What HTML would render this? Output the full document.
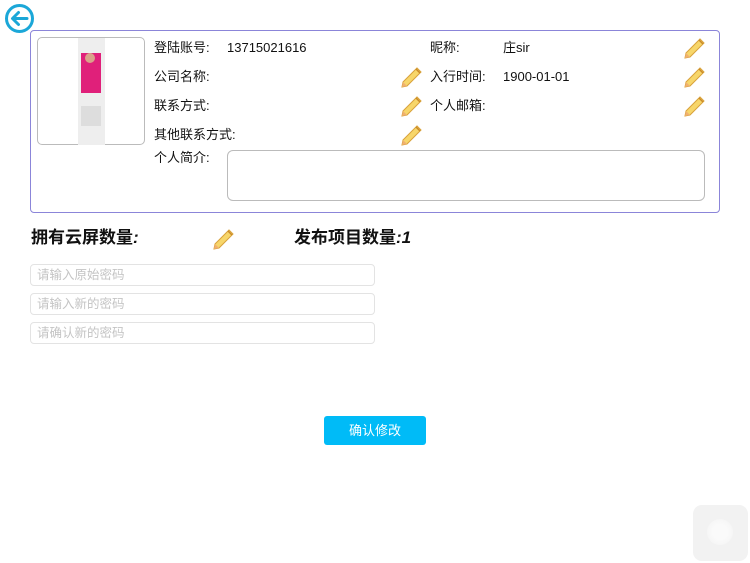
<!DOCTYPE html>
<html><head><meta charset="utf-8"><style>
body{margin:0;width:750px;height:563px;background:#fff;position:relative;overflow:hidden;font-family:"Liberation Sans","Noto Sans CJK SC",sans-serif;color:#111}
.a{position:absolute}
.l{position:absolute;font-size:13px;line-height:16px;white-space:nowrap}
.box{left:30px;top:30px;width:688px;height:181px;border:1.5px solid #8b85d9;border-radius:4px}
.inp{position:absolute;left:30px;border:1px solid #e3e3e3;border-radius:4px;font-size:12.5px;color:#c4c4c4;line-height:20px;padding-left:6px;box-sizing:border-box;width:345px;height:22px}
.pen{position:absolute;width:26px;height:26px}
</style></head><body>
<svg class="a" style="left:4px;top:3px" width="31" height="31" viewBox="0 0 31 31"><circle cx="15.5" cy="15.5" r="13" fill="none" stroke="#1ba7d8" stroke-width="3"/><path d="M23 15.5H9M14.5 9.5L8.5 15.5L14.5 21.5" fill="none" stroke="#1ba7d8" stroke-width="3" stroke-linecap="round" stroke-linejoin="round"/></svg>
<div class="a box"></div>
<div class="a" style="left:37px;top:37px;width:108px;height:108px;border:1px solid #bbb;border-radius:5px;box-sizing:border-box"></div>
<div class="a" style="left:78px;top:38px;width:27px;height:107px;background:#eee"></div>
<div class="a" style="left:81px;top:53px;width:20px;height:40px;background:#e0207a"></div>
<div class="a" style="left:85px;top:53px;width:10px;height:10px;background:#d9a38a;border-radius:50%"></div>
<div class="a" style="left:81px;top:106px;width:20px;height:20px;background:#ddd"></div>
<div class="l" style="left:154px;top:40px">登陆账号:</div>
<div class="l" style="left:227px;top:40px">13715021616</div>
<div class="l" style="left:430px;top:40px">昵称:</div>
<div class="l" style="left:503px;top:40px">庄sir</div>
<div class="l" style="left:154px;top:69px">公司名称:</div>
<div class="l" style="left:430px;top:69px">入行时间:</div>
<div class="l" style="left:503px;top:69px">1900-01-01</div>
<div class="l" style="left:154px;top:98px">联系方式:</div>
<div class="l" style="left:430px;top:98px">个人邮箱:</div>
<div class="l" style="left:154px;top:127px">其他联系方式:</div>
<div class="l" style="left:154px;top:150px">个人简介:</div>
<div class="a" style="left:227px;top:150px;width:478px;height:51px;border:1px solid #bbb;border-radius:6px;box-sizing:border-box"></div>
<svg width="0" height="0" style="position:absolute"><defs><g id="p"><path d="M4 19L18 5L22 9L8 23L3 24Z" fill="#f7d66a" stroke="#d9a23a" stroke-width="1"/><path d="M17 6L21 10" stroke="#c98a2a" stroke-width="1.5"/><path d="M3 24L4 19L8 23Z" fill="#f0b070"/></g></defs></svg>
<svg class="pen" style="left:399px;top:63px"><use href="#p"/></svg>
<svg class="pen" style="left:399px;top:92px"><use href="#p"/></svg>
<svg class="pen" style="left:399px;top:121px"><use href="#p"/></svg>
<svg class="pen" style="left:682px;top:34px"><use href="#p"/></svg>
<svg class="pen" style="left:682px;top:63px"><use href="#p"/></svg>
<svg class="pen" style="left:682px;top:92px"><use href="#p"/></svg>
<svg class="pen" style="left:211px;top:225px"><use href="#p"/></svg>
<div class="a" style="left:31px;top:227px;font-size:17px;line-height:22px;font-weight:bold">拥有云屏数量<i>:</i></div>
<div class="a" style="left:294px;top:227px;font-size:17px;line-height:22px;font-weight:bold">发布项目数量<i>:1</i></div>
<div class="inp" style="top:264px">请输入原始密码</div>
<div class="inp" style="top:293px">请输入新的密码</div>
<div class="inp" style="top:322px">请确认新的密码</div>
<div class="a" style="left:324px;top:416px;width:102px;height:29px;background:#00bbf7;border-radius:3px;color:#fff;font-size:13px;line-height:29px;text-align:center">确认修改</div>
<div class="a" style="left:693px;top:505px;width:55px;height:56px;background:#f2f2f2;border-radius:9px"></div>
<div class="a" style="left:707px;top:519px;width:26px;height:26px;background:radial-gradient(circle,#fafafa 40%,#f2f2f2 100%);border-radius:50%"></div>
</body></html>
